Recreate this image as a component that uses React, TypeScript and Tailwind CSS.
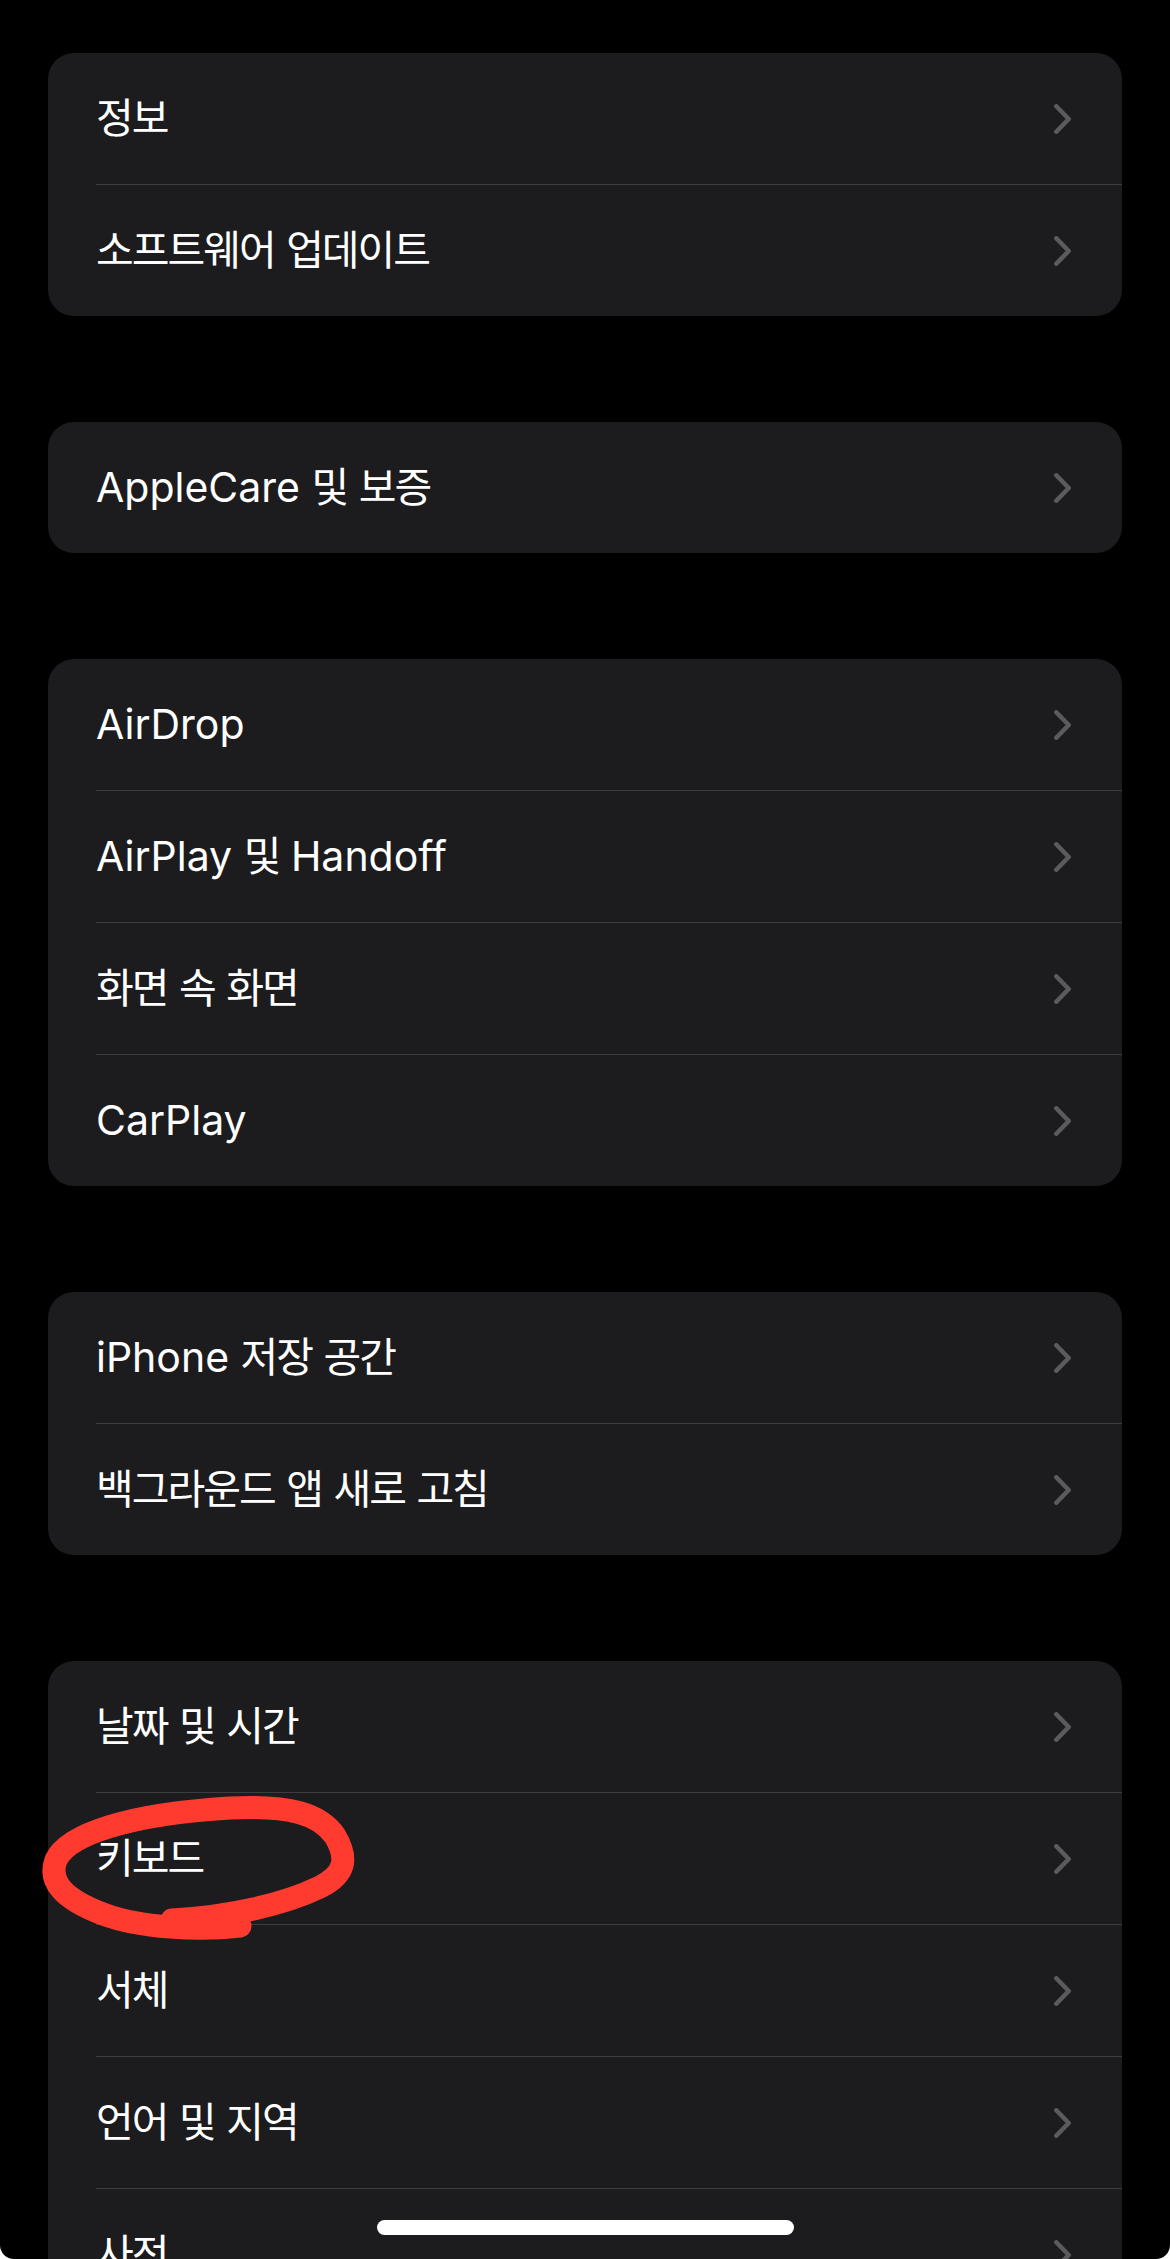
import React from 'react';

const GROUPS: string[][] = [
  ['정보', '소프트웨어 업데이트'],
  ['AppleCare 및 보증'],
  ['AirDrop', 'AirPlay 및 Handoff', '화면 속 화면', 'CarPlay'],
  ['iPhone 저장 공간', '백그라운드 앱 새로 고침'],
  ['날짜 및 시간', '키보드', '서체', '언어 및 지역', '사전'],
];

// Hangul runs get tighter tracking so they sit closer to the iOS font widths
const splitRuns = (label: string) => label.match(/[\uAC00-\uD7A3]+|[^\uAC00-\uD7A3]+/g) ?? [label];

const Chevron = () => (
  <svg width="17" height="30" viewBox="0 0 17 30" fill="none">
    <path d="M2.3 2.3 L14.7 15 L2.3 27.7" stroke="#5b5b5f" strokeWidth="4.5" strokeLinecap="round" strokeLinejoin="round" />
  </svg>
);

const Row = ({ label }: { label: string }) => (
  <div className="h-[131px] flex items-center justify-between pl-[48px] pr-[51px]">
    <span className="text-[41px] text-white font-normal leading-none">
      {splitRuns(label).map((run, i) =>
        /[\uAC00-\uD7A3]/.test(run) ? (
          <span key={i} className="tracking-[-2px]">{run}</span>
        ) : (
          <span key={i}>{run}</span>
        )
      )}
    </span>
    <Chevron />
  </div>
);

const Group = ({ items }: { items: string[] }) => (
  <div className="bg-[#1c1c1e] rounded-[26px] overflow-hidden shrink-0">
    {items.map((label, i) => (
      <div key={label}>
        {i > 0 && <div className="ml-[48px] h-px bg-[#3d3d41]" />}
        <Row label={label} />
      </div>
    ))}
  </div>
);

export default function App() {
  return (
    <div
      className="relative w-[1170px] h-[2259px] bg-black overflow-hidden rounded-b-[14px]"
      style={{ fontFamily: 'Inter, "Noto Sans CJK KR", sans-serif' }}
    >
      <div className="flex flex-col gap-[106px] pt-[53px] px-[48px]">
        {GROUPS.map((items, i) => (
          <Group key={i} items={items} />
        ))}
      </div>

      {/* red hand-drawn mark around 키보드 */}
      <svg className="absolute left-0 top-0 pointer-events-none" width="1170" height="2259" viewBox="0 0 1170 2259" fill="none">
        <path
          d="M240 1926 C200 1931 140 1928 103 1914 C63 1899 48 1881 56 1860 C68 1834 130 1814 230 1808 C290 1805 320 1814 335 1836 C348 1858 346 1874 320 1887 C285 1904 230 1917 172 1920"
          stroke="#ff3b30"
          strokeWidth="23"
          strokeLinecap="round"
          strokeLinejoin="round"
        />
      </svg>

      {/* home indicator */}
      <div className="absolute left-[377px] top-[2220px] w-[417px] h-[15px] rounded-full bg-white" />
    </div>
  );
}
